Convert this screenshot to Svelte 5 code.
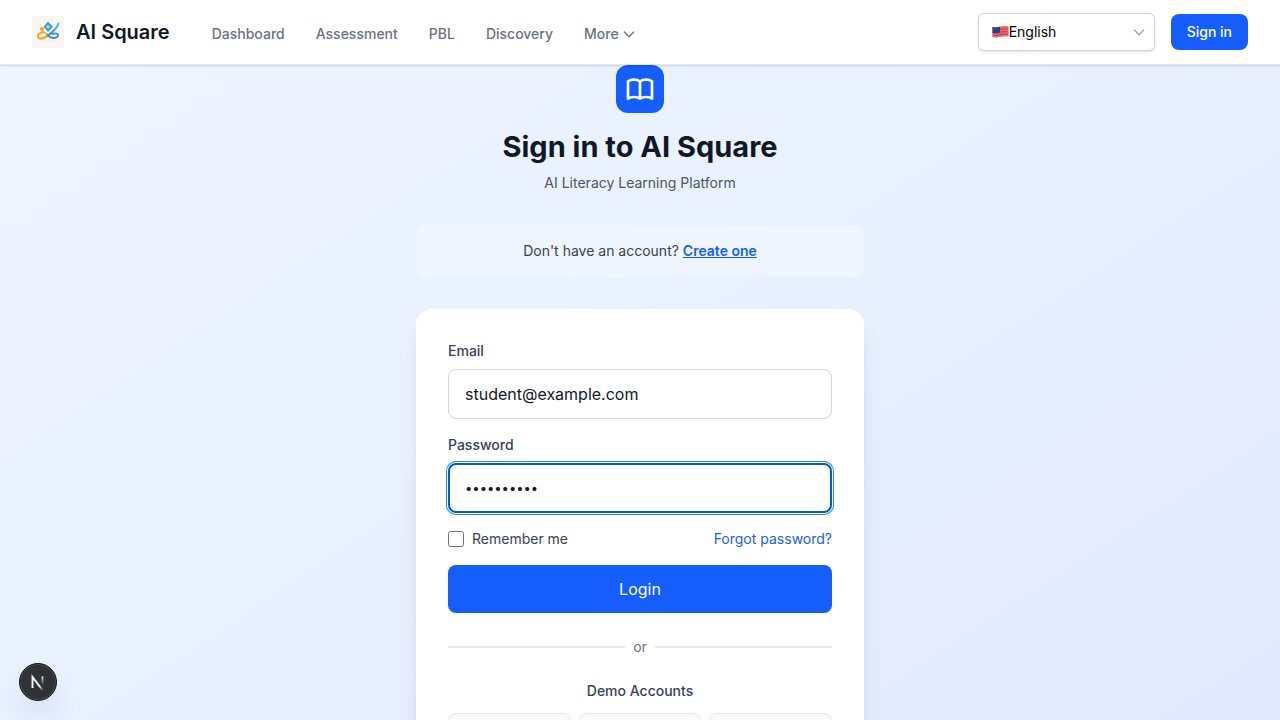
<script>
  const links = ['Dashboard', 'Assessment', 'PBL', 'Discovery'];
  const demoAccounts = ['Student', 'Teacher', 'Admin'];
  let email = $state('student@example.com');
  let password = $state('student123');
  let remember = $state(false);
  let language = $state('en');
</script>

<div class="page">
  <header class="topbar">
    <a class="brand" href="#home">
      <svg class="logo" viewBox="0 0 32 32" aria-hidden="true">
        <defs>
          <linearGradient id="ribbon" gradientUnits="userSpaceOnUse" x1="5" y1="0" x2="27" y2="0">
            <stop offset="0" stop-color="#f7a32b" />
            <stop offset="0.4" stop-color="#f3ab3c" />
            <stop offset="0.58" stop-color="#3a87bd" />
            <stop offset="1" stop-color="#62bfe6" />
          </linearGradient>
        </defs>
        <rect width="32" height="32" fill="#faf7f2" />
        <ellipse cx="16" cy="25.500" rx="8" ry="1" fill="#f1ede7" />
        <path d="M11.500 16.500C8 16.500 5.500 18.500 6 21C7 24 12 22.500 16 19.500C20 16.500 24.500 13.500 26.500 7.500" fill="none" stroke="url(#ribbon)" stroke-width="2.200" stroke-linecap="round" />
        <path d="M15.500 18.500C17 20.500 18.500 22 21.500 22C24.500 22 27 20 25.500 18C24.500 16.700 22 17.500 20.500 18" fill="none" stroke="#3d91cb" stroke-width="1.900" stroke-linecap="round" />
        <path d="M10.500 15.500C12 16 13.500 16.500 14.500 18" fill="none" stroke="#f3ab3c" stroke-width="1.600" stroke-linecap="round" />
        <circle cx="10" cy="13" r="2" fill="#f6a02c" />
        <path d="M16 5.500L21 10.700L16 15.900L11.500 10.700Z" fill="#39a5cf" />
        <path d="M16 8.700L18 10.700L16 12.700L14.200 10.700Z" fill="#a5e1ec" />
      </svg>
      <span>AI Square</span>
    </a>
    <nav>
      {#each links as link}
        <a href="#{link.toLowerCase()}">{link}</a>
      {/each}
      <button class="more" type="button">
        More
        <svg width="16" height="16" viewBox="0 0 24 24" fill="none" stroke="currentColor" stroke-width="2" stroke-linecap="round" stroke-linejoin="round" aria-hidden="true"><path d="M19 9l-7 7-7-7" /></svg>
      </button>
    </nav>
    <div class="actions">
      <div class="language">
        <svg class="flag" viewBox="0 0 17 14" aria-hidden="true">
          <defs>
            <clipPath id="wave"><path d="M.5 2C5 3.500 8 .5 16.500 1.500V11.500C9 10.500 6 13.500.5 12Z" /></clipPath>
          </defs>
          <g clip-path="url(#wave)">
            <rect width="17" height="14" fill="#d9434e" />
            <path d="M0 4C6 5 9 2 17 3M0 6.500C6 7.500 9 4.500 17 5.500M0 9C6 10 9 7 17 8M0 11.500C6 12.500 9 9.500 17 10.500" fill="none" stroke="#e98b91" stroke-width=".8" />
            <path d="M0 0H8V7.500C5 8.500 3 8.500 0 8Z" fill="#23438d" />
          </g>
        </svg>
        <select aria-label="Language" bind:value={language}>
          <option value="en">English</option>
        </select>
        <svg class="caret" width="16" height="16" viewBox="0 0 24 24" fill="none" stroke="currentColor" stroke-width="2" stroke-linecap="round" stroke-linejoin="round" aria-hidden="true"><path d="M19 9l-7 7-7-7" /></svg>
      </div>
      <button class="signin" type="button">Sign in</button>
    </div>
  </header>

  <main>
    <div class="column">
      <div class="intro">
        <div class="badge">
          <svg width="32" height="32" viewBox="0 0 24 24" fill="none" stroke="currentColor" stroke-width="2" stroke-linecap="round" stroke-linejoin="round" aria-hidden="true"><path d="M12 6.253v13m0-13C10.832 5.477 9.246 5 7.500 5S4.168 5.477 3 6.253v13C4.168 18.477 5.754 18 7.500 18s3.332.477 4.500 1.253m0-13C13.168 5.477 14.754 5 16.500 5c1.747 0 3.332.477 4.500 1.253v13C19.832 18.477 18.247 18 16.500 18c-1.746 0-3.332.477-4.500 1.253" /></svg>
        </div>
        <h1>Sign in to AI Square</h1>
        <p>AI Literacy Learning Platform</p>
      </div>

      <p class="register">Don't have an account? <a href="#register">Create one</a></p>

      <section class="card">
        <form onsubmit={(event) => event.preventDefault()}>
          <div class="field">
            <label for="email">Email</label>
            <input id="email" type="email" bind:value={email} />
          </div>
          <div class="field">
            <label for="password">Password</label>
            <input id="password" class="active" type="password" bind:value={password} />
          </div>
          <div class="options">
            <label class="remember" for="remember">
              <input id="remember" type="checkbox" bind:checked={remember} />
              Remember me
            </label>
            <a href="#forgot">Forgot password?</a>
          </div>
          <button class="login" type="submit">Login</button>
        </form>
        <div class="divider"><span>or</span></div>
        <h2>Demo Accounts</h2>
        <div class="demos">
          {#each demoAccounts as account}
            <button type="button" aria-label="{account} demo account"></button>
          {/each}
        </div>
      </section>
    </div>
  </main>

  <button class="devtools" type="button" aria-label="Open developer tools">
    <svg width="36" height="36" viewBox="0 0 36 36" fill="none" aria-hidden="true">
      <defs>
        <linearGradient id="diagonal" x1="18" y1="18" x2="24" y2="26" gradientUnits="userSpaceOnUse">
          <stop offset=".4" stop-color="#fff" />
          <stop offset="1" stop-color="#fff" stop-opacity="0" />
        </linearGradient>
        <linearGradient id="stem" x1="0" y1="12" x2="0" y2="21" gradientUnits="userSpaceOnUse">
          <stop stop-color="#fff" />
          <stop offset="1" stop-color="#fff" stop-opacity="0" />
        </linearGradient>
      </defs>
      <path d="M12.500 24V13L22.800 26.500" stroke="url(#diagonal)" stroke-width="1.900" />
      <path d="M22.500 12.500V22" stroke="url(#stem)" stroke-width="1.800" />
    </svg>
  </button>
</div>

<style>
  :global(body) {
    margin: 0;
  }

  .page,
  .page * {
    box-sizing: border-box;
  }

  .page {
    display: flex;
    flex-direction: column;
    height: 100vh;
    overflow: hidden;
    color: #101828;
    font-family: Inter, "Liberation Sans", sans-serif;
    font-size: 14px;
    line-height: 20px;
  }

  button,
  input,
  select {
    margin: 0;
    font: inherit;
  }

  button {
    cursor: pointer;
  }

  h1,
  h2,
  p {
    margin: 0;
  }

  svg {
    display: block;
    flex: none;
  }

  .topbar {
    position: relative;
    z-index: 1;
    display: flex;
    flex: none;
    align-items: center;
    height: 65px;
    padding: 0 32px;
    border-bottom: 1px solid #e5e7eb;
    background: #fff;
    box-shadow: 0 1px 3px rgb(0 0 0 / 10%), 0 1px 2px -1px rgb(0 0 0 / 10%);
  }

  .brand {
    display: flex;
    align-items: center;
    gap: 12px;
    color: #101828;
    font-size: 20px;
    font-weight: 600;
    line-height: 28px;
    text-decoration: none;
  }

  .logo {
    width: 32px;
    height: 32px;
  }

  nav {
    display: flex;
    align-items: center;
    gap: 31px;
    margin-left: 42px;
    padding-top: 4px;
    font-weight: 500;
  }

  nav a,
  .more {
    color: #6a7282;
    text-decoration: none;
  }

  .more {
    display: flex;
    align-items: center;
    gap: 2px;
    padding: 0;
    border: 0;
    background: none;
  }

  .actions {
    display: flex;
    align-items: center;
    gap: 16px;
    margin-left: auto;
  }

  .language {
    display: flex;
    align-items: center;
    width: 177px;
    height: 38px;
    padding: 0 7px 0 13px;
    border: 1px solid #d1d5dc;
    border-radius: 6px;
    background: #fff;
    box-shadow: 0 1px 3px rgb(0 0 0 / 10%), 0 1px 2px -1px rgb(0 0 0 / 10%);
  }

  .flag {
    width: 17px;
    height: 14px;
  }

  select {
    flex: 1;
    min-width: 0;
    padding: 0;
    border: 0;
    outline: 0;
    appearance: none;
    background: none;
    color: #000;
  }

  .caret {
    color: #99a1af;
  }

  .signin {
    padding: 8px 16px;
    border: 0;
    border-radius: 8px;
    background: #155dfc;
    color: #fff;
    font-weight: 500;
  }

  main {
    display: flex;
    flex: 1 0 auto;
    justify-content: center;
    padding: 0 16px 96px;
    background: linear-gradient(to bottom right in oklab, #eff6ff, #e0e7ff);
  }

  .column {
    width: 100%;
    max-width: 448px;
  }

  .intro {
    display: flex;
    flex-direction: column;
    align-items: center;
    text-align: center;
  }

  .badge {
    display: grid;
    place-items: center;
    width: 48px;
    height: 48px;
    border-radius: 12px;
    background: #155dfc;
    color: #fff;
  }

  h1 {
    margin: 16px 0 8px;
    font-size: 29px;
    font-weight: 700;
    line-height: 36px;
  }

  .intro p {
    color: #4a5565;
  }

  .register {
    margin: 32px 0;
    padding: 16px;
    border-radius: 8px;
    background: #eff6ff;
    color: #364153;
    text-align: center;
  }

  .register a {
    color: #155dfc;
    font-weight: 600;
  }

  .card {
    padding: 32px;
    border-radius: 16px;
    background: #fff;
    box-shadow: 0 20px 25px -5px rgb(0 0 0 / 10%), 0 8px 10px -6px rgb(0 0 0 / 10%);
  }

  form {
    display: grid;
    gap: 16px;
  }

  .field {
    display: grid;
    gap: 8px;
  }

  label {
    color: #364153;
    font-weight: 500;
  }

  .field input {
    width: 100%;
    height: 50px;
    padding: 0 16px;
    border: 1px solid #d1d5dc;
    border-radius: 8px;
    outline: 0;
    background: #fff;
    color: #101828;
    font-size: 16px;
    line-height: 24px;
  }

  .field .active {
    border-color: #fff;
    outline: 2px solid #005fcc;
    outline-offset: -2px;
    box-shadow: 0 0 0 1px #fff, 0 0 0 2px #2b7fff;
    font-size: 13px;
  }

  .options {
    display: flex;
    align-items: center;
    justify-content: space-between;
  }

  .remember {
    display: flex;
    align-items: center;
    gap: 8px;
    font-weight: 400;
  }

  .remember input {
    width: 16px;
    height: 16px;
  }

  .options a {
    color: #155dfc;
    text-decoration: none;
  }

  .login {
    padding: 12px 16px;
    border: 0;
    border-radius: 8px;
    background: #155dfc;
    color: #fff;
    font-size: 16px;
    line-height: 24px;
  }

  .divider {
    display: flex;
    align-items: center;
    gap: 8px;
    margin: 24px 0;
    color: #6a7282;
  }

  .divider::before,
  .divider::after {
    flex: 1;
    height: 2px;
    background: #e5e7eb;
    content: "";
  }

  h2 {
    margin-bottom: 12px;
    color: #364153;
    font-size: 14px;
    font-weight: 500;
    line-height: 20px;
    text-align: center;
  }

  .demos {
    display: grid;
    grid-template-columns: repeat(3, 1fr);
    gap: 8px;
  }

  .demos button {
    height: 60px;
    border: 1px solid #e5e7eb;
    border-radius: 8px;
    background: #f9fafb;
  }

  .devtools {
    position: fixed;
    bottom: 19px;
    left: 19px;
    z-index: 2;
    display: grid;
    place-items: center;
    width: 38px;
    height: 38px;
    padding: 0;
    border: 1px solid #171717;
    border-radius: 50%;
    background: #303236;
    box-shadow: inset 0 0 0 1px #4b4c4f, 0 16px 32px -8px rgb(0 0 0 / 20%);
  }
</style>
